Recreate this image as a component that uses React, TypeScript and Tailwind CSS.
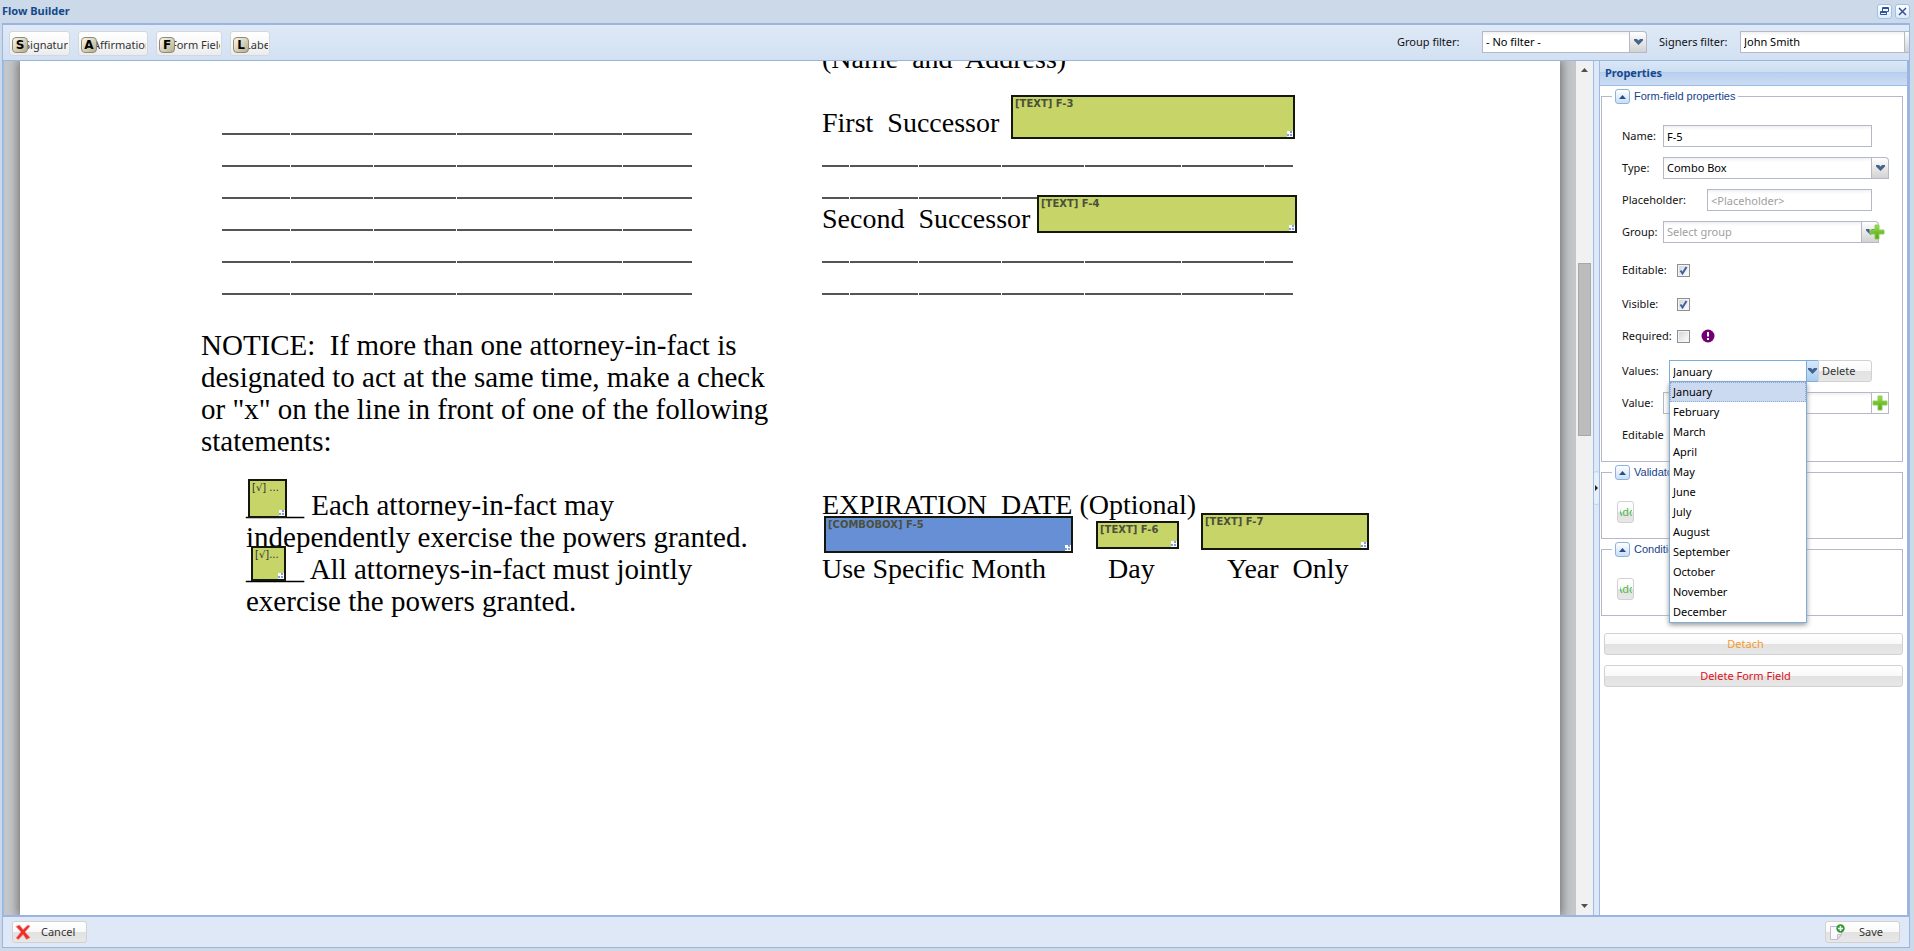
import React from "react";
import { ReactNode } from "react";

const MONTHS = [
  "January",
  "February",
  "March",
  "April",
  "May",
  "June",
  "July",
  "August",
  "September",
  "October",
  "November",
  "December",
];

const TOOLS = [
  { key: "S", label: "Signature", width: "w-[61px]" },
  { key: "A", label: "Affirmation", width: "w-[70px]" },
  { key: "F", label: "Form Field", width: "w-[66px]" },
  { key: "L", label: "Label", width: "w-[40px]" },
];

const FIELDS = [
  { text: "[TEXT] F-3", place: "left-[991px] top-[34px] w-[284px] h-[44px]" },
  { text: "[TEXT] F-4", place: "left-[1017px] top-[134px] w-[260px] h-[38px]" },
  { text: "[COMBOBOX] F-5", place: "left-[804px] top-[455px] w-[249px] h-[37px]", active: true },
  { text: "[TEXT] F-6", place: "left-[1076px] top-[460px] w-[83px] h-[28px]" },
  { text: "[TEXT] F-7", place: "left-[1181px] top-[452px] w-[168px] h-[37px]" },
  { text: "[√] ...", place: "left-[228px] top-[418px] w-[39px] h-[39px]", light: true },
  { text: "[√]...", place: "left-[231px] top-[485px] w-[35px] h-[35px]", light: true },
];

const LEFT_RULE = ["w-[68px]", "w-[82px]", "w-[82px]", "w-[96px]", "w-[68px]", "w-[69px]"];
const RIGHT_RULE = ["w-[27px]", "w-[68px]", "w-[82px]", "w-[82px]", "w-[96px]", "w-[82px]", "w-[28px]"];

const BUTTON =
  "border border-[#d1d1d1] rounded-[3px] bg-[linear-gradient(#ffffff,#f9f9f9_48%,#e2e2e2_52%,#e7e7e7)] text-[#333333]";
const INPUT =
  "h-[22px] min-w-0 border border-[#b5b8c8] bg-[linear-gradient(#f1f1f1,#ffffff_4px)] px-[3px] outline-none placeholder:text-[#a0a0a0]";
const TITLE_BUTTON =
  "w-[15px] h-[15px] flex items-center justify-center rounded-[3px] border border-[#a3c0e8] bg-[linear-gradient(#ffffff,#dcebfc)]";

function Chevron() {
  return (
    <svg width="9" height="6" viewBox="0 0 9 6" aria-hidden="true">
      <path d="M0 0h3l1.500 1.500L6 0h3v1.500L4.500 6 0 1.500z" fill="#44648f" />
    </svg>
  );
}

function PlusIcon() {
  return (
    <svg width="16" height="16" viewBox="0 0 16 16" aria-hidden="true">
      <defs>
        <linearGradient id="plus" x1="0" y1="0" x2="0" y2="1">
          <stop offset="0" stopColor="#9bdc4a" />
          <stop offset="1" stopColor="#4da412" />
        </linearGradient>
      </defs>
      <path
        d="M6 1h4v5h5v4h-5v5H6v-5H1V6h5z"
        fill="url(#plus)"
        stroke="#8fce5a"
        strokeLinejoin="round"
      />
    </svg>
  );
}

type SelectProps = {
  id: string;
  value: string;
  className?: string;
  muted?: boolean;
};

function Select({ id, value, className, muted }: SelectProps) {
  return (
    <div className={`flex h-[22px] shrink-0 ${className}`}>
      <select
        id={id}
        className={`${INPUT} flex-1 appearance-none ${muted ? "text-[#a0a0a0]" : "text-black"}`}
      >
        <option>{value}</option>
      </select>
      <span className="w-[17px] flex items-center justify-center border border-l-0 border-[#b5b8c8] rounded-tr-sm bg-[linear-gradient(#ffffff,#e8e8e8_50%,#d2d2d2)]">
        <Chevron />
      </span>
    </div>
  );
}

function Rule({ parts }: { parts: string[] }) {
  return (
    <div className="h-8 flex items-end gap-px pb-0.5">
      {parts.map((part, i) => (
        <span key={i} className={`h-0.5 bg-[#555555] ${part}`}></span>
      ))}
    </div>
  );
}

type SectionProps = {
  title: string;
  children: ReactNode;
};

function Section({ title, children }: SectionProps) {
  return (
    <fieldset className="mt-[3px] border border-[#b5b8c8]">
      <legend className="ml-[10px] px-[3px] h-[15px] flex items-center gap-1 font-['Liberation_Sans',sans-serif] text-[#15428b]">
        <button
          type="button"
          aria-label={`Collapse ${title}`}
          className="w-[15px] h-[15px] flex items-center justify-center border border-[#8fb2dd] rounded-[3px] bg-[linear-gradient(#ffffff,#c7dffa)]"
        >
          <svg width="7" height="4" viewBox="0 0 7 4">
            <path d="M3.500 0L7 4H0z" fill="#2b4e86" />
          </svg>
        </button>
        {title}
      </legend>
      {children}
    </fieldset>
  );
}

function Row({ children, className = "" }: { children: ReactNode; className?: string }) {
  return <div className={`h-[22px] flex items-center ${className}`}>{children}</div>;
}

function Check({ id, label, checked }: { id: string; label: string; checked?: boolean }) {
  return (
    <>
      <label htmlFor={id} className="w-[55px]">
        {label}
      </label>
      <span className="relative w-[13px] h-[13px]">
        <input
          id={id}
          type="checkbox"
          defaultChecked={checked}
          className="peer block appearance-none w-[13px] h-[13px] border border-[#8e8f8f] bg-[linear-gradient(135deg,#cfd3d8,#ffffff)] shadow-[inset_0_0_0_1px_#f4f4f4]"
        />
        <svg
          className="hidden peer-checked:block absolute inset-0 pointer-events-none"
          width="13"
          height="13"
          viewBox="0 0 13 13"
        >
          <path d="M3.500 6.500L5.500 9.500 9.500 3" fill="none" stroke="#415f9c" strokeWidth="2" />
        </svg>
      </span>
    </>
  );
}

function Document() {
  return (
    <div className="relative flex-1 overflow-hidden bg-white shadow-[0_0_10px_2px_#707070] font-['Liberation_Serif',serif] leading-8 text-black whitespace-pre">
      <div className="-mt-5 pl-[181px] grid grid-cols-[621px_1fr]">
        <div className="pt-16 text-[29px]">
          <div className="pl-[21px]">
            {[0, 1, 2, 3, 4, 5].map((n) => (
              <Rule key={n} parts={LEFT_RULE} />
            ))}
          </div>
          <p className="mt-8">
            {"NOTICE:  If more than one attorney-in-fact is\ndesignated to act at the same time, make a check\nor \"x\" on the line in front of one of the following\nstatements:"}
          </p>
          <p className="mt-8 pl-[45px]">
            {"____ Each attorney-in-fact may\nindependently exercise the powers granted.\n____ All attorneys-in-fact must jointly\nexercise the powers granted."}
          </p>
        </div>
        <div className="text-[28px]">
          <p className="h-8 leading-9">{"(Name  and  Address)"}</p>
          <p className="mt-8 h-8 leading-9">{"First  Successor"}</p>
          <Rule parts={RIGHT_RULE} />
          <Rule parts={RIGHT_RULE} />
          <p className="h-8 leading-9">{"Second  Successor"}</p>
          <Rule parts={RIGHT_RULE} />
          <Rule parts={RIGHT_RULE} />
          <p className="mt-48">{"EXPIRATION  DATE (Optional)"}</p>
          <div className="mt-8 flex">
            <p className="w-[286px]">Use Specific Month</p>
            <p className="w-[119px]">Day</p>
            <p>Year  Only</p>
          </div>
        </div>
      </div>
      {FIELDS.map((field) => (
        <div
          key={field.text}
          className={`absolute overflow-hidden border-2 border-[#14170c] pl-[2px] font-['DejaVu_Sans',sans-serif] text-[10px] leading-[14px] ${field.place} ${
            field.active ? "bg-[#668fd5]" : "bg-[#c6d468]"
          } ${field.light ? "text-[#333333]" : "font-bold text-[#4b4f3c]"}`}
        >
          {field.text}
          <svg className="absolute right-0 bottom-0" width="6" height="6" viewBox="0 0 6 6">
            <path d="M0 0h6v6H0z" fill="#ffffff" />
            <path d="M3 0h2v2H3zM0 3h2v2H0zM3 3h2v2H3z" fill="#7f9fe0" />
          </svg>
        </div>
      ))}
    </div>
  );
}

function Properties() {
  return (
    <aside className="w-[308px] shrink-0 border-l border-[#99bce8] bg-white">
      <h2 className="h-[25px] px-[5px] border-b border-[#99bce8] bg-[linear-gradient(#dae7f6,#cddef3_45%,#b3ccee_46%,#b3ccee_50%,#bad0ef_51%,#cbddf3)] font-bold leading-6 text-[#15498b]">
        Properties
      </h2>
      <div className="pl-px pr-1">
        <Section title="Form-field properties">
          <div className="flex flex-col gap-2.5 pt-[21px] pb-[15px] pl-5">
            <Row>
              <label htmlFor="name" className="w-[41px]">Name:</label>
              <input id="name" defaultValue="F-5" className={`${INPUT} w-[209px] text-black`} />
            </Row>
            <Row>
              <label htmlFor="type" className="w-[41px]">Type:</label>
              <Select id="type" value="Combo Box" className="w-[226px]" />
            </Row>
            <Row>
              <label htmlFor="placeholder" className="w-[85px]">Placeholder:</label>
              <input id="placeholder" placeholder="<Placeholder>" className={`${INPUT} w-[165px] text-black`} />
            </Row>
            <Row>
              <label htmlFor="group" className="w-[41px]">Group:</label>
              <Select id="group" value="Select group" muted className="w-[216px]" />
              <button type="button" aria-label="Add group" className="-ml-2.5">
                <PlusIcon />
              </button>
            </Row>
            <Row className="mt-1.5">
              <Check id="editable" label="Editable:" checked />
            </Row>
            <Row className="mt-0.5">
              <Check id="visible" label="Visible:" checked />
            </Row>
            <Row>
              <Check id="required" label="Required:" />
              <svg className="ml-[11px]" width="14" height="14" viewBox="0 0 14 14" aria-hidden="true">
                <circle cx="7" cy="7" r="6.500" fill="#730073" />
                <path d="M7 3v4.500M7 9v2" stroke="#ffffff" strokeWidth="2" />
              </svg>
            </Row>
            <Row className="relative mt-[3px]">
              <label htmlFor="values" className="w-[47px]">Values:</label>
              <input
                id="values"
                role="combobox"
                aria-expanded="true"
                aria-controls="months"
                defaultValue="January"
                className="h-[22px] w-[138px] border border-[#7eadd9] bg-white px-[3px] text-black outline-none"
              />
              <span className="w-[11px] h-[22px] flex items-center justify-center border-y border-[#7eadd9] bg-[linear-gradient(#d6e8fb,#a9cdf0)] overflow-hidden">
                <Chevron />
              </span>
              <button type="button" className={`${BUTTON} w-[54px] h-[22px] pl-[3px] rounded-l-none text-left`}>
                Delete
              </button>
              <ul
                id="months"
                role="listbox"
                className="absolute z-10 left-[47px] top-[22px] w-[138px] border border-t-0 border-[#7eadd9] bg-white text-black leading-5 shadow-[0_2px_5px_#999999]"
              >
                {MONTHS.map((month, i) => (
                  <li
                    key={month}
                    role="option"
                    aria-selected={i === 0}
                    className={
                      i === 0
                        ? "h-5 px-[2px] border border-dotted border-[#8ea9d8] bg-[#cbdaf0] leading-[18px]"
                        : "h-5 px-[3px]"
                    }
                  >
                    {month}
                  </li>
                ))}
              </ul>
            </Row>
            <Row>
              <label htmlFor="value" className="w-[41px]">Value:</label>
              <input id="value" className={`${INPUT} w-[209px] text-black`} />
              <button
                type="button"
                aria-label="Add value"
                className="w-[17px] h-[22px] flex items-center border border-l-0 border-[#b5b8c8]"
              >
                <PlusIcon />
              </button>
            </Row>
            <Row>Editable</Row>
          </div>
        </Section>
        {["Validators", "Conditions"].map((title) => (
          <Section key={title} title={title}>
            <div className="pt-[21px] pb-[15px] pl-[15px]">
              <button
                type="button"
                className={`${BUTTON} w-[17px] h-[22px] flex items-center justify-center overflow-hidden`}
              >
                <span className="w-[12px] flex justify-center overflow-hidden text-[#4fb848]">Add</span>
              </button>
            </div>
          </Section>
        ))}
        <div className="mt-[17px] pl-[3px] flex flex-col gap-2.5">
          <button type="button" className={`${BUTTON} h-[22px] pr-4`}>
            <span className="text-[#f29b2e]">Detach</span>
          </button>
          <button type="button" className={`${BUTTON} h-[22px] pr-4`}>
            <span className="text-[#e0111b]">Delete Form Field</span>
          </button>
        </div>
      </div>
    </aside>
  );
}

export default function App() {
  return (
    <div className="h-screen flex flex-col overflow-hidden bg-[#ccd9e8] pl-[2px] pr-1 pb-[3px] font-['Noto_Sans',sans-serif] text-[11px] text-[#111111]">
      <header className="h-[23px] shrink-0 flex items-center justify-between">
        <h1 className="font-bold text-[#15498b]">Flow Builder</h1>
        <div className="flex gap-[3px]">
          <button type="button" aria-label="Restore" className={TITLE_BUTTON}>
            <svg width="9" height="9" viewBox="0 0 9 9" fill="none" stroke="#31519b">
              <path d="M2.500 4V0.500h6v4H7M2.500 1.500h6M0.500 4.500h6v3h-6zM0.500 5.500h6" />
            </svg>
          </button>
          <button type="button" aria-label="Close" className={TITLE_BUTTON}>
            <svg width="9" height="9" viewBox="0 0 9 9" fill="none" stroke="#31519b" strokeWidth="1.500">
              <path d="M1 1l7 7M8 1L1 8" />
            </svg>
          </button>
        </div>
      </header>
      <div className="flex-1 min-h-0 flex flex-col border border-t-2 border-[#99b5e0]">
        <div className="h-[35px] shrink-0 flex items-start gap-[8px] overflow-hidden bg-[linear-gradient(#dfe9f7,#d2e1f2)] pl-[6px] pt-[6px]">
          {TOOLS.map((tool) => (
            <button
              key={tool.key}
              type="button"
              className={`h-[25px] shrink-0 flex items-center overflow-hidden rounded-[3px] border border-[#d4d8de] bg-[linear-gradient(#ffffff,#f8f8f8_50%,#e9ebee)] pl-[2px] pr-px pt-[3px] whitespace-nowrap text-[#333333] ${tool.width}`}
            >
              <span className="z-10 w-[16px] h-[16px] shrink-0 rounded-sm border border-[#8e8a78] bg-[linear-gradient(135deg,#fbf9ee,#b5ac88)] text-center font-['DejaVu_Sans',sans-serif] font-bold text-[12px] leading-[14px] text-black">
                {tool.key}
              </span>
              <span className="-ml-1 overflow-hidden">{tool.label}</span>
            </button>
          ))}
          <div className="ml-auto flex">
            <label htmlFor="group-filter" className="w-[85px] leading-[22px]">Group filter:</label>
            <Select id="group-filter" value="- No filter -" className="w-[165px]" />
            <label htmlFor="signers-filter" className="ml-[12px] w-[81px] leading-[22px]">Signers filter:</label>
            <div className="w-[169px] overflow-hidden">
              <Select id="signers-filter" value="John Smith" className="w-[182px]" />
            </div>
          </div>
        </div>
        <main className="flex-1 min-h-0 flex border-t border-b-2 border-r-2 border-[#99b5e0]">
          <div className="flex-1 min-w-0 flex overflow-hidden border-l border-r border-[#99bce8] bg-[#c6c7ca]">
            <div className="flex-1 min-w-0 flex overflow-hidden pl-4 pr-4">
              <Document />
            </div>
            <div className="w-[17px] shrink-0 flex flex-col items-center bg-[#f1f1f1]">
              <svg className="mt-[7px]" width="7" height="4" viewBox="0 0 7 4">
                <path d="M3.500 0L7 4H0z" fill="#505050" />
              </svg>
              <span className="mt-[191px] w-[13px] h-[173px] border border-[#a8a8a8] bg-[#bcbcbc]"></span>
              <svg className="mt-auto mb-[7px]" width="7" height="4" viewBox="0 0 7 4">
                <path d="M0 0h7L3.500 4z" fill="#505050" />
              </svg>
            </div>
          </div>
          <div className="w-[5px] shrink-0 flex items-center bg-[#dfe8f6]">
            <button
              type="button"
              aria-label="Collapse properties"
              className="w-[5px] h-[34px] flex items-center justify-center rounded-sm border-y border-[#c3cfdf] bg-[#e9eff8]"
            >
              <svg width="3" height="6" viewBox="0 0 3 6">
                <path d="M0 0l3 3-3 3z" fill="#222222" />
              </svg>
            </button>
          </div>
          <Properties />
        </main>
        <footer className="h-[30px] shrink-0 flex items-center justify-between bg-[#dfe8f6] pl-[9px] pr-[9px]">
          <button type="button" className={`${BUTTON} w-[75px] h-[22px] flex items-center gap-[10px] pl-[2px]`}>
            <svg width="16" height="16" viewBox="0 0 16 16" aria-hidden="true">
              <path
                d="M1 2.500L4.500 1 8 5.500 13 1l2 1.200L10 8l5 5.500-3.500 2L8 10.500 3.500 15.500 1 14l5-6z"
                fill="#ec2f2b"
                stroke="#f6918c"
                strokeWidth="0.700"
              />
            </svg>
            Cancel
          </button>
          <button type="button" className={`${BUTTON} w-[75px] h-[22px] flex items-center gap-[14px] pl-[3px]`}>
            <svg width="16" height="16" viewBox="0 0 16 16" aria-hidden="true">
              <path d="M1.500 2.500h11v8l-4 5h-7z" fill="#fbfaff" stroke="#c3bcd2" />
              <path d="M12.500 10.500h-4v5z" fill="#e9e4f2" stroke="#c3bcd2" />
              <circle cx="11.500" cy="4.500" r="4.200" fill="#2f9c2f" />
              <path d="M11.500 2v5M9 4.500h5" stroke="#ffffff" strokeWidth="1.500" />
            </svg>
            Save
          </button>
        </footer>
      </div>
    </div>
  );
}
